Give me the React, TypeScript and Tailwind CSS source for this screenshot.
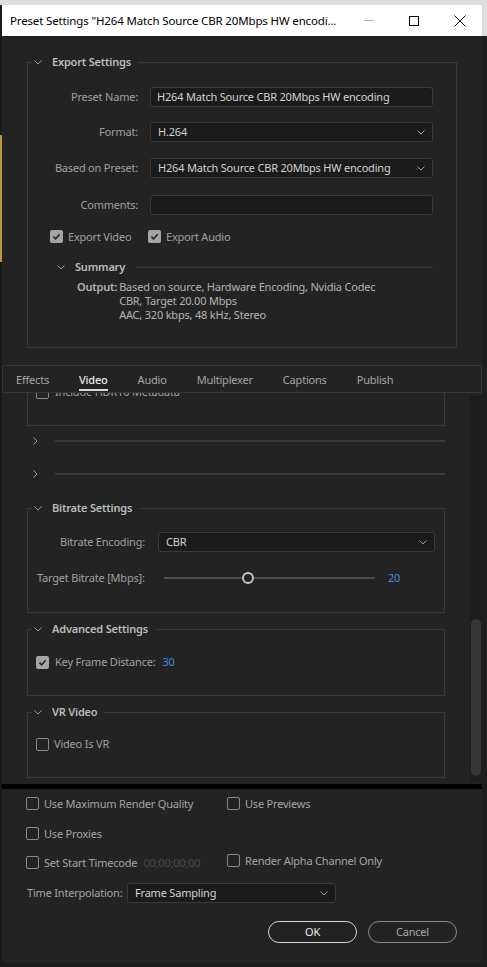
import type { ReactNode } from "react";

function Chevron({ dir = "down" }: { dir?: "down" | "right" }) {
  return dir === "down" ? (
    <svg viewBox="0 0 8 5" className="h-[5px] w-[8px] shrink-0">
      <path d="M0.5 0.5 L4 4 L7.5 0.5" fill="none" stroke="#9a9a9a" strokeWidth="1" />
    </svg>
  ) : (
    <svg viewBox="0 0 5 8" className="h-[8px] w-[5px] shrink-0">
      <path d="M0.5 0.5 L4 4 L0.5 7.5" fill="none" stroke="#9a9a9a" strokeWidth="1" />
    </svg>
  );
}

function Check({ on = false }: { on?: boolean }) {
  if (on) {
    return (
      <span className="flex h-[13px] w-[13px] shrink-0 items-center justify-center rounded-[2px] bg-[#a4a4a4]">
        <svg viewBox="0 0 10 10" className="h-[9px] w-[9px]">
          <path d="M1.6 5.2 L4 7.5 L8.5 2.5" fill="none" stroke="#262626" strokeWidth="1.8" />
        </svg>
      </span>
    );
  }
  return <span className="h-[13px] w-[13px] shrink-0 rounded-[2px] border-[1.5px] border-[#8a8a8a]" />;
}

function Select({ value, className = "" }: { value: string; className?: string }) {
  return (
    <div className={`flex h-[20px] items-center justify-between rounded-[3px] border border-[#3a3a3a] bg-[#1b1b1b] pl-[7px] pr-[7px] text-[#d2d2d2] ${className}`}>
      <span>{value}</span>
      <Chevron />
    </div>
  );
}

function Section({ title, className = "", children }: { title: string; className?: string; children: ReactNode }) {
  return (
    <div className={`relative border border-[#393939] ${className}`}>
      <div className="absolute -top-[8px] left-[4px] flex h-[14px] items-center gap-[10px] bg-[#232323] pl-[2px] pr-[7px]">
        <Chevron />
        <span className="font-semibold text-[#bcbcbc]">{title}</span>
      </div>
      {children}
    </div>
  );
}

function Collapsed() {
  return (
    <div className="flex h-[14px] items-center">
      <div className="flex w-[53px] justify-start pl-[31px]">
        <Chevron dir="right" />
      </div>
      <div className="h-[2px] w-[390px] bg-[#393939]" />
    </div>
  );
}

export default function App() {
  const tabs = ["Effects", "Video", "Audio", "Multiplexer", "Captions", "Publish"];

  return (
    <div className="relative h-[967px] w-[487px] overflow-hidden bg-[#1c1c1c] font-['Noto_Sans','Open_Sans',sans-serif] text-[11px] leading-[14px] tracking-[-0.2px]">
      <div className="h-[5px] bg-[#dedede]" />
      <div className="flex">
        {/* left strip of the app behind */}
        <div className="flex w-[2px] flex-col bg-[#1a1a1a]">
          <div className="h-[130px]" />
          <div className="h-[127px] bg-[#b8983e]" />
        </div>

        {/* window */}
        <div className="flex h-[957px] w-[480px] flex-col bg-[#232323]">
          {/* title bar */}
          <div className="flex h-[31px] items-center bg-white pl-[8px] text-black">
            <span className="text-[11.5px] leading-none tracking-[-0.15px]">Preset Settings "H264 Match Source CBR 20Mbps HW encodi...</span>
            <div className="ml-auto flex items-center">
              <div className="h-[1px] w-[10px] bg-[#b4b4b4]" />
              <div className="ml-[35px] h-[10px] w-[10px] border border-black" />
              <svg viewBox="0 0 12 12" className="ml-[35px] mr-[16px] h-[12px] w-[12px]">
                <path d="M0.5 0.5 L11.5 11.5 M11.5 0.5 L0.5 11.5" stroke="#000" strokeWidth="1" />
              </svg>
            </div>
          </div>

          {/* Export Settings */}
          <Section title="Export Settings" className="ml-[25px] mt-[26px] h-[286px] w-[430px]">
            <div className="flex flex-col pt-[24px] text-[#a0a0a0]">
              {[
                { label: "Preset Name:", value: "H264 Match Source CBR 20Mbps HW encoding", kind: "input", mt: "mt-0" },
                { label: "Format:", value: "H.264", kind: "select", mt: "mt-[15px]" },
                { label: "Based on Preset:", value: "H264 Match Source CBR 20Mbps HW encoding", kind: "select", mt: "mt-[16px]" },
                { label: "Comments:", value: "", kind: "input", mt: "mt-[17px]" },
              ].map((r) => (
                <div key={r.label} className={`flex items-center ${r.mt}`}>
                  <span className="w-[110px] text-right">{r.label}</span>
                  {r.kind === "select" ? (
                    <Select value={r.value} className="ml-[12px] w-[283px]" />
                  ) : (
                    <div className="ml-[12px] flex h-[20px] w-[283px] items-center rounded-[3px] border border-[#3a3a3a] bg-[#1b1b1b] pl-[6px] text-[#d2d2d2]">
                      {r.value}
                    </div>
                  )}
                </div>
              ))}

              <div className="ml-[22px] mt-[15px] flex h-[13px] items-center">
                <div className="flex w-[98px] items-center gap-[5px]">
                  <Check on />
                  <span>Export Video</span>
                </div>
                <div className="flex items-center gap-[5px]">
                  <Check on />
                  <span>Export Audio</span>
                </div>
              </div>

              <div className="ml-[29px] mt-[17px] flex h-[14px] items-center">
                <Chevron />
                <span className="ml-[10px] font-semibold text-[#bcbcbc]">Summary</span>
                <div className="ml-auto mr-[23px] h-[1px] w-[297px] bg-[#3c3c3c]" />
              </div>

              <div className="ml-[49px] mt-[6px] flex">
                <span className="font-semibold text-[#b4b4b4]">Output:</span>
                <div className="ml-[2px] flex flex-col text-[#b4b4b4]">
                  <span>Based on source, Hardware Encoding, Nvidia Codec</span>
                  <span>CBR, Target 20.00 Mbps</span>
                  <span>AAC, 320 kbps, 48 kHz, Stereo</span>
                </div>
              </div>
            </div>
          </Section>

          {/* tabs */}
          <div className="mt-[17px] flex h-[28px] items-stretch gap-[30px] border border-[#353535] pl-[13px] text-[#a6a6a6]">
            {tabs.map((t) => (
              <div key={t} className="relative flex items-center pt-[1px]">
                <span className={t === "Video" ? "font-medium text-[#e8e8e8]" : ""}>{t}</span>
                {t === "Video" && <div className="absolute bottom-[1px] left-0 right-0 h-[2px] bg-[#d8d8d8]" />}
              </div>
            ))}
          </div>

          {/* scrolling tab content */}
          <div className="flex h-[391px]">
            <div className="w-[468px] overflow-hidden">
              <div className="ml-[25px] -mt-[21px] h-[54px] w-[418px] border border-[#393939]">
                <div className="ml-[8px] mt-[12px] flex items-center gap-[6px] text-[#a0a0a0]">
                  <Check />
                  <span>Include HDR10 Metadata</span>
                </div>
              </div>

              <div className="mt-[8px]">
                <Collapsed />
              </div>
              <div className="mt-[19px]">
                <Collapsed />
              </div>

              <Section title="Bitrate Settings" className="ml-[25px] mt-[27px] h-[105px] w-[418px]">
                <div className="flex flex-col pt-[23px] text-[#a0a0a0]">
                  <div className="flex items-center">
                    <span className="w-[117px] text-right">Bitrate Encoding:</span>
                    <Select value="CBR" className="ml-[13px] w-[277px]" />
                  </div>
                  <div className="mt-[19px] flex h-[14px] items-center">
                    <span className="ml-[9px] w-[127px]">Target Bitrate [Mbps]:</span>
                    <div className="relative flex h-[14px] w-[211px] items-center">
                      <div className="h-[2px] w-full bg-[#4e4e4e]" />
                      <div className="absolute left-[78px] top-[1px] h-[12px] w-[12px] rounded-full border-2 border-[#c4c4c4] bg-[#232323]" />
                    </div>
                    <span className="ml-[13px] text-[#3c8ee0]">20</span>
                  </div>
                </div>
              </Section>

              <Section title="Advanced Settings" className="ml-[25px] mt-[16px] h-[67px] w-[418px]">
                <div className="ml-[8px] mt-[25px] flex items-center gap-[6px] text-[#a0a0a0]">
                  <Check on />
                  <span>Key Frame Distance:</span>
                  <span className="ml-[1px] text-[#3c8ee0]">30</span>
                </div>
              </Section>

              <Section title="VR Video" className="ml-[25px] mt-[16px] h-[66px] w-[418px]">
                <div className="ml-[8px] mt-[24px] flex items-center gap-[5px] text-[#a0a0a0]">
                  <Check />
                  <span>Video Is VR</span>
                </div>
              </Section>
            </div>

            {/* scrollbar */}
            <div className="mt-[2px] h-[387px] w-[12px] bg-[#1d1d1d] pl-[1px] pr-[1px]">
              <div className="mt-[224px] h-[157px] w-[10px] rounded-full bg-[#363636]" />
            </div>
          </div>

          <div className="h-[5px] bg-black" />

          {/* bottom options */}
          <div className="flex flex-col pl-[24px] text-[#a4a4a4]">
            <div className="mt-[8px] flex h-[13px] items-center">
              <div className="flex w-[201px] items-center gap-[5px]">
                <Check />
                <span>Use Maximum Render Quality</span>
              </div>
              <div className="flex items-center gap-[5px]">
                <Check />
                <span>Use Previews</span>
              </div>
            </div>
            <div className="mt-[17px] flex h-[13px] items-center gap-[5px]">
              <Check />
              <span>Use Proxies</span>
            </div>
            <div className="mt-[16px] flex h-[13px] items-center">
              <div className="flex w-[201px] items-center gap-[5px]">
                <Check />
                <span>Set Start Timecode</span>
                <span className="ml-[1px] text-[#4a4a4a]">00;00;00;00</span>
              </div>
              <div className="-mt-[4px] flex items-center gap-[5px]">
                <Check />
                <span>Render Alpha Channel Only</span>
              </div>
            </div>
            <div className="mt-[14px] flex items-center">
              <span className="ml-[1px] w-[100px]">Time Interpolation:</span>
              <Select value="Frame Sampling" className="w-[209px]" />
            </div>
            <div className="mr-[25px] mt-[18px] flex justify-end gap-[11px]">
              <div className="flex h-[22px] w-[89px] items-center justify-center rounded-full border border-[#d6d6d6] text-[#ececec]">
                OK
              </div>
              <div className="flex h-[22px] w-[89px] items-center justify-center rounded-full border border-[#8a8a8a] text-[#a8a8a8]">
                Cancel
              </div>
            </div>
          </div>
        </div>

        {/* right strip of the app behind */}
        <div className="flex w-[5px] flex-col bg-[#1e1e1e]">
          <div className="h-[31px] bg-[#dedede]" />
        </div>
      </div>
    </div>
  );
}
